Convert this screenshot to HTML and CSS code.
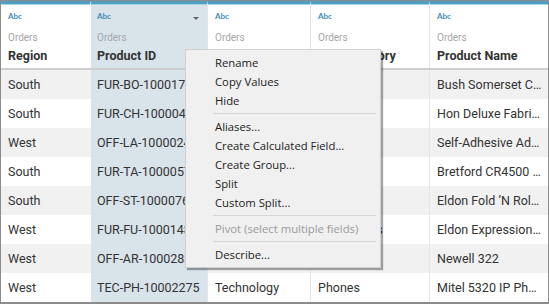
FILE: index.html
```html
<!DOCTYPE html>
<html>
<head>
<meta charset="utf-8">
<link rel="stylesheet" href="styles.css">
</head>
<body>
<div class="frame">
  <div class="row head">
    <div class="hc"><div class="type">Abc</div><div class="src">Orders</div><div class="name">Region</div></div>
    <div class="hc sel"><div class="type">Abc<span class="arrow"></span></div><div class="src">Orders</div><div class="name">Product ID</div></div>
    <div class="hc"><div class="type">Abc</div><div class="src">Orders</div><div class="name">Category</div></div>
    <div class="hc"><div class="type">Abc</div><div class="src">Orders</div><div class="name">Sub-Category</div></div>
    <div class="hc"><div class="type">Abc</div><div class="src">Orders</div><div class="name">Product Name</div></div>
  </div>
  <div class="row odd"><div class="c">South</div><div class="c sel">FUR-BO-10001798</div><div class="c">Furniture</div><div class="c">Bookcases</div><div class="c">Bush Somerset Collection Bookcase</div></div>
  <div class="row"><div class="c">South</div><div class="c sel">FUR-CH-10000454</div><div class="c">Furniture</div><div class="c">Chairs</div><div class="c">Hon Deluxe Fabric Upholstered Stacking Chairs</div></div>
  <div class="row odd"><div class="c">West</div><div class="c sel">OFF-LA-10000240</div><div class="c">Office Supplies</div><div class="c">Labels</div><div class="c">Self-Adhesive Address Labels</div></div>
  <div class="row"><div class="c">South</div><div class="c sel">FUR-TA-10000577</div><div class="c">Furniture</div><div class="c">Tables</div><div class="c">Bretford CR4500 Series Slim Rectangular Table</div></div>
  <div class="row odd"><div class="c">South</div><div class="c sel">OFF-ST-10000760</div><div class="c">Office Supplies</div><div class="c">Storage</div><div class="c">Eldon Fold ’N Roll Cart System</div></div>
  <div class="row"><div class="c">West</div><div class="c sel">FUR-FU-10001487</div><div class="c">Furniture</div><div class="c">Furnishings</div><div class="c">Eldon Expressions Wood and Plastic Desk Accessories</div></div>
  <div class="row odd"><div class="c">West</div><div class="c sel">OFF-AR-10002833</div><div class="c">Office Supplies</div><div class="c">Art</div><div class="c">Newell 322</div></div>
  <div class="row"><div class="c">West</div><div class="c sel">TEC-PH-10002275</div><div class="c">Technology</div><div class="c">Phones</div><div class="c">Mitel 5320 IP Phone VoIP phone</div></div>

  <div class="menu">
    <div class="mi">Rename</div>
    <div class="mi">Copy Values</div>
    <div class="mi">Hide</div>
    <div class="sep"></div>
    <div class="mi">Aliases...</div>
    <div class="mi">Create Calculated Field...</div>
    <div class="mi">Create Group...</div>
    <div class="mi">Split</div>
    <div class="mi">Custom Split...</div>
    <div class="sep"></div>
    <div class="mi dis">Pivot (select multiple fields)</div>
    <div class="sep"></div>
    <div class="mi">Describe...</div>
  </div>
</div>
</body>
</html>
```
FILE: styles.css
```css
* { box-sizing: border-box; }
html, body { margin: 0; padding: 0; background: #fff; }
body { font-family: Roboto, "Noto Sans", sans-serif; color: #333; }

.frame {
  position: relative;
  width: 549px;
  height: 304px;
  border: 1px solid #8c8c8c;
  border-bottom-width: 2px;
  overflow: hidden;
}

.row {
  display: grid;
  grid-template-columns: 90px 117px 103px 119px 118px;
  height: 29px;
}
.row.odd { background: #f1f1f1; }

.head {
  height: 69px;
  border-bottom: 2px solid #cdcdcd;
  background: #fff;
}

.hc {
  border-top: 3px solid #4f9fc2;
  box-shadow: inset 0 1px 0 #a9d3e4;
  border-right: 1px solid #e4e4e4;
  padding: 7px 0 0 7px;
  position: relative;
}
.hc:first-child { border-right: 1px solid #fff; }
.hc:last-child { border-right: none; }
.hc.sel { padding-left: 6px; }

.type {
  font-family: Lato, Roboto, sans-serif;
  font-size: 8px;
  font-weight: 700;
  color: #3a8db0;
  height: 11px;
  line-height: 11px;
}
.arrow {
  position: absolute;
  right: 8px;
  top: 13px;
  width: 0;
  height: 0;
  border-left: 3px solid transparent;
  border-right: 3px solid transparent;
  border-top: 3px solid #666;
}
.src {
  font-size: 10px;
  color: #a6a6a6;
  margin-top: 9px;
  line-height: 13px;
}
.name {
  font-size: 12.5px;
  font-weight: 700;
  color: #333;
  margin-top: 4px;
  line-height: 16px;
  white-space: nowrap;
}

.c {
  font-size: 12.5px;
  line-height: 29px;
  padding: 0 6px 0 7px;
  white-space: nowrap;
  overflow: hidden;
  text-overflow: ellipsis;
  border-right: 1px solid #e6e6e6;
}
.c:first-child { border-right: none; }
.c:last-child { border-right: none; }
.c.sel { padding-left: 6px; }

.sel { background: #d9e3ea; }
.row.odd .sel { background: #d9e3ea; }
.hc.sel { background: #d9e3ea; }

.menu {
  position: absolute;
  left: 184px;
  top: 48px;
  width: 196px;
  padding: 3px 0;
  background: #f0f0f0;
  border: 1px solid #cfcfcf;
  box-shadow: 2px 2px 1px rgba(0, 0, 0, 0.35);
  font-family: "Open Sans", "Noto Sans", sans-serif;
  font-size: 11.3px;
  color: #222;
}
.mi {
  height: 19px;
  line-height: 19px;
  padding-left: 29px;
  white-space: nowrap;
}
.mi.dis { color: #9a9a9a; }
.sep {
  height: 1px;
  background: #d7d7d7;
  margin: 3px 4px 3px 27px;
}
```
